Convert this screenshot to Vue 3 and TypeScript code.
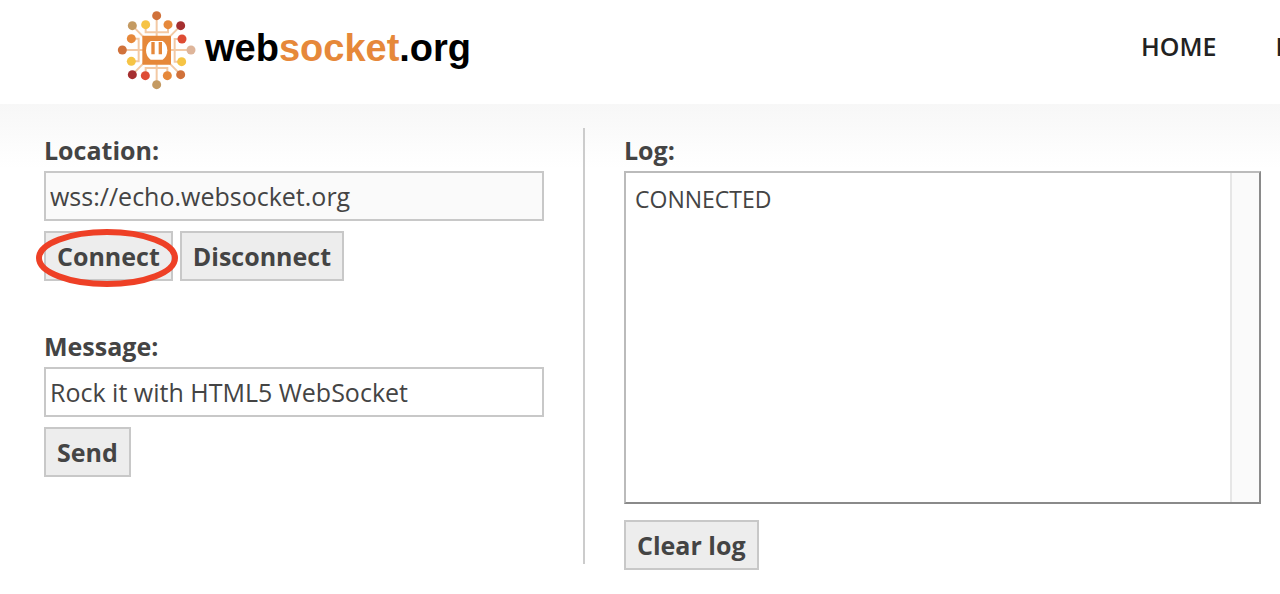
<script setup lang="ts">
import { ref } from 'vue'

interface Pin {
  x: number
  y: number
  color: string
}

const location = ref<string>('wss://echo.websocket.org')
const message = ref<string>('Rock it with HTML5 WebSocket')
const log = ref<string[]>(['CONNECTED'])

const pins: Pin[] = [
  { x: 140, y: 32, color: '#d0713a' },
  { x: 67, y: 62, color: '#c49a62' },
  { x: 107, y: 59, color: '#f6c445' },
  { x: 174, y: 59, color: '#e6883a' },
  { x: 212, y: 62, color: '#a52f30' },
  { x: 64, y: 101, color: '#e6883a' },
  { x: 216, y: 102, color: '#de4c34' },
  { x: 37, y: 135, color: '#d0713a' },
  { x: 243, y: 135, color: '#deb59a' },
  { x: 64, y: 169, color: '#f6c445' },
  { x: 215, y: 170, color: '#f6c445' },
  { x: 67, y: 209, color: '#a52f30' },
  { x: 106, y: 212, color: '#de4c34' },
  { x: 172, y: 212, color: '#e6883a' },
  { x: 212, y: 209, color: '#d0713a' },
  { x: 140, y: 239, color: '#c49a62' },
]

function write(line: string): void {
  log.value.push(line)
}

function clearLog(): void {
  log.value = []
}
</script>

<template>
  <div class="page">
    <header class="header">
      <a class="brand" href="#">
        <svg class="mark" viewBox="0 0 285 270" aria-hidden="true">
          <g fill="none" stroke="#f3c9a4" stroke-width="6">
            <path d="M140 32V239M37 135H243M67 62L212 209M212 62L67 209" />
            <path d="M107 59V82H174V59M107 212V189H172V212" />
            <path d="M64 101H86V169H64M216 102H194V170H215" />
          </g>
          <rect x="97" y="92" width="86" height="87" rx="3" fill="#e6883a" />
          <path d="M122 108H158Q172 118 172 136T158 164H122Q108 154 108 136T122 108Z" fill="#fff" />
          <path d="M124 111V148H134V111ZM146 111V148H156V111Z" fill="#e6883a" />
          <circle v-for="pin in pins" :key="`${pin.x}-${pin.y}`" :cx="pin.x" :cy="pin.y" r="13.5" :fill="pin.color" />
        </svg>
        <span class="wordmark">web<span class="accent">socket</span>.org</span>
      </a>
      <nav class="nav">
        <a href="#">HOME</a>
        <a href="#">DEMOS</a>
      </nav>
    </header>

    <main class="main">
      <section class="column">
        <label class="label" for="location">Location:</label>
        <input id="location" v-model="location" class="field muted" type="text">
        <div class="actions">
          <span class="marked">
            <button class="button" type="button" @click="write('CONNECTED')">Connect</button>
            <svg class="ring" viewBox="0 0 142 58" aria-hidden="true">
              <ellipse cx="71" cy="29" rx="68" ry="26" fill="none" stroke="#ee4026" stroke-width="6" />
            </svg>
          </span>
          <button class="button" type="button" @click="write('DISCONNECTED')">Disconnect</button>
        </div>

        <label class="label second" for="message">Message:</label>
        <input id="message" v-model="message" class="field" type="text">
        <div class="actions">
          <button class="button" type="button" @click="write(`SENT: ${message}`)">Send</button>
        </div>
      </section>

      <div class="divider"></div>

      <section class="column">
        <h2 id="log-title" class="label">Log:</h2>
        <div class="log" role="log" aria-labelledby="log-title">
          <div class="lines">
            <p v-for="(line, i) in log" :key="i">{{ line }}</p>
          </div>
          <div class="track"></div>
        </div>
        <button class="button clear" type="button" @click="clearLog">Clear log</button>
      </section>
    </main>
  </div>
</template>

<style>
body {
  margin: 0;
  background: #fff;
}
</style>

<style scoped>
.page {
  min-height: 100vh;
  overflow: hidden;
  color: #444;
  font-family: "Open Sans", "Noto Sans", sans-serif;
  font-size: 25px;
  line-height: 34px;
}

.header {
  display: flex;
  align-items: center;
  justify-content: space-between;
  box-sizing: border-box;
  height: 104px;
  padding: 0 0 4px 110px;
  overflow: hidden;
}

.brand {
  display: flex;
  align-items: center;
  color: #000;
  text-decoration: none;
}

.mark {
  width: 95px;
  height: 90px;
}

.wordmark {
  padding-bottom: 4px;
  font-family: "Liberation Sans", Arial, sans-serif;
  font-size: 38px;
  font-weight: 700;
}

.accent {
  color: #e6883a;
}

.nav {
  display: flex;
  flex: none;
  gap: 59px;
  width: 139px;
  padding-bottom: 8px;
}

.nav a {
  color: #222;
  font-size: 25px;
  font-weight: 600;
  text-decoration: none;
}

.main {
  display: grid;
  grid-template-columns: 500fr 2px 637fr;
  column-gap: 39px;
  align-items: start;
  padding: 24px 19px 24px 44px;
  background: linear-gradient(#f7f7f7, #fff 64px);
}

.column {
  min-width: 0;
  padding-top: 5px;
}

.label {
  display: block;
  margin: 0 0 4px;
  font-size: 25px;
  font-weight: 700;
}

.second {
  margin-top: 48px;
}

.field {
  display: block;
  box-sizing: border-box;
  width: 100%;
  height: 50px;
  padding: 0 4px;
  border: 2px solid #c8c8c8;
  border-radius: 0;
  outline: 0;
  background: #fff;
  color: #444;
  font: inherit;
}

.muted {
  background: #fafafa;
}

.actions {
  display: flex;
  gap: 7px;
  margin-top: 10px;
}

.button {
  display: block;
  box-sizing: border-box;
  height: 50px;
  padding: 0 11px;
  border: 2px solid #c8c8c8;
  border-radius: 0;
  background: #ededed;
  color: #444;
  font: inherit;
  font-weight: 700;
}

.marked {
  position: relative;
}

.ring {
  position: absolute;
  top: -2px;
  left: -8px;
  width: 142px;
  height: 58px;
  pointer-events: none;
}

.divider {
  height: 436px;
  background: #ccc;
}

.log {
  display: flex;
  box-sizing: border-box;
  height: 333px;
  border: 2px solid;
  border-color: #bbb #8a8a8a #8a8a8a #bbb;
  background: #fff;
}

.lines {
  flex: 1;
  padding: 9px;
  overflow: hidden;
  font-size: 23px;
}

.lines p {
  margin: 0;
}

.track {
  width: 27px;
  border-left: 2px solid #e6e6e6;
  background: #fafafa;
}

.clear {
  margin-top: 16px;
}
</style>
